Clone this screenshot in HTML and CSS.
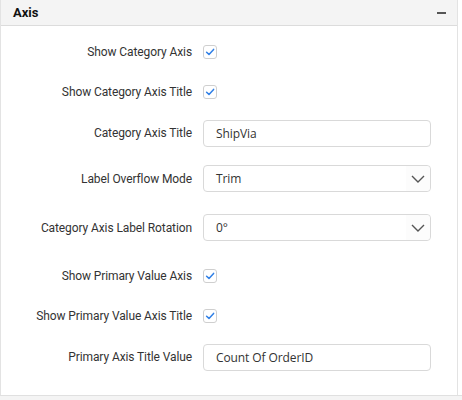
FILE: index.html
```html
<!DOCTYPE html>
<html>
<head>
<meta charset="utf-8">
<link rel="stylesheet" href="styles.css">
</head>
<body>
<div class="panel">
  <div class="panel-header">
    <span class="panel-title">Axis</span>
    <span class="collapse-icon"></span>
  </div>
  <div class="panel-body">
    <div class="row row-check">
      <label class="row-label">Show Category Axis</label>
      <span class="checkbox"><svg viewBox="0 0 14 14" width="14" height="14"><path d="M3.6 7.2 L6 9.4 L10.6 4.4" fill="none" stroke="#2f7fe6" stroke-width="1.5" stroke-linecap="round" stroke-linejoin="round"/></svg></span>
    </div>
    <div class="row row-check">
      <label class="row-label">Show Category Axis Title</label>
      <span class="checkbox"><svg viewBox="0 0 14 14" width="14" height="14"><path d="M3.6 7.2 L6 9.4 L10.6 4.4" fill="none" stroke="#2f7fe6" stroke-width="1.5" stroke-linecap="round" stroke-linejoin="round"/></svg></span>
    </div>
    <div class="row row-input">
      <label class="row-label">Category Axis Title</label>
      <div class="textbox">ShipVia</div>
    </div>
    <div class="row row-select">
      <label class="row-label">Label Overflow Mode</label>
      <div class="dropdown"><span class="dropdown-value">Trim</span><span class="dropdown-icon"><svg viewBox="0 0 14 8" width="14" height="8"><path d="M1 1 L7 7 L13 1" fill="none" stroke="#555" stroke-width="1.4"/></svg></span></div>
    </div>
    <div class="row row-select">
      <label class="row-label">Category Axis Label Rotation</label>
      <div class="dropdown"><span class="dropdown-value">0°</span><span class="dropdown-icon"><svg viewBox="0 0 14 8" width="14" height="8"><path d="M1 1 L7 7 L13 1" fill="none" stroke="#555" stroke-width="1.4"/></svg></span></div>
    </div>
    <div class="row row-check">
      <label class="row-label">Show Primary Value Axis</label>
      <span class="checkbox"><svg viewBox="0 0 14 14" width="14" height="14"><path d="M3.6 7.2 L6 9.4 L10.6 4.4" fill="none" stroke="#2f7fe6" stroke-width="1.5" stroke-linecap="round" stroke-linejoin="round"/></svg></span>
    </div>
    <div class="row row-check">
      <label class="row-label">Show Primary Value Axis Title</label>
      <span class="checkbox"><svg viewBox="0 0 14 14" width="14" height="14"><path d="M3.6 7.2 L6 9.4 L10.6 4.4" fill="none" stroke="#2f7fe6" stroke-width="1.5" stroke-linecap="round" stroke-linejoin="round"/></svg></span>
    </div>
    <div class="row row-input">
      <label class="row-label">Primary Axis Title Value</label>
      <div class="textbox">Count Of OrderID</div>
    </div>
  </div>
</div>
<div class="next-header"></div>
</body>
</html>
```

FILE: styles.css
```css
html, body {
  margin: 0;
  padding: 0;
  background: #ffffff;
}
body {
  width: 462px;
  height: 400px;
  overflow: hidden;
  font-family: Roboto, "Liberation Sans", sans-serif;
  color: #333333;
}
.panel {
  width: 456px;
  border-left: 1px solid #e3e3e3;
  border-right: 1px solid #e3e3e3;
  box-sizing: content-box;
}
.panel-header {
  height: 25px;
  background: #f4f4f4;
  border-bottom: 1px solid #dcdcdc;
  display: flex;
  align-items: center;
  justify-content: space-between;
  padding: 0 11px 0 12px;
}
.panel-title {
  font-weight: 700;
  font-size: 13px;
  color: #111111;
}
.collapse-icon {
  width: 9px;
  height: 2px;
  background: #555555;
}
.panel-body {
  height: 369px;
  padding-top: 6px;
  box-sizing: border-box;
  display: flex;
  flex-direction: column;
}
.row {
  display: grid;
  grid-template-columns: 191px 228px;
  column-gap: 11px;
  align-items: center;
  flex: none;
}
.row-check { height: 40px; }
.row-input { height: 42px; }
.row-select { height: 49px; }
.row-select + .row-check { margin-top: 4px; }
.row-label {
  text-align: right;
  font-size: 12px;
  letter-spacing: -0.1px;
  color: #333333;
}
.checkbox {
  width: 14px;
  height: 14px;
  border: 1px solid #cfcfcf;
  border-radius: 3px;
  box-sizing: border-box;
  display: flex;
  align-items: center;
  justify-content: center;
  background: #fff;
}
.checkbox svg { display: block; margin: -1px; }
.textbox, .dropdown {
  height: 27px;
  border: 1px solid #d9d9d9;
  border-radius: 4px;
  box-sizing: border-box;
  font-family: "Open Sans", "Noto Sans", sans-serif;
  font-size: 12px;
  letter-spacing: -0.1px;
  color: #333333;
  display: flex;
  align-items: center;
}
.textbox { padding-left: 12px; }
.dropdown { justify-content: space-between; }
.dropdown-value { padding-left: 12px; }
.dropdown-icon {
  width: 24px;
  align-self: stretch;
  display: flex;
  align-items: center;
  justify-content: center;
  background: #fcfcfc;
  border-radius: 0 4px 4px 0;
}
.dropdown-icon svg { display: block; }
.next-header {
  height: 4px;
  border-top: 1px solid #e0e0e0;
  background: #f4f4f4;
}
```
